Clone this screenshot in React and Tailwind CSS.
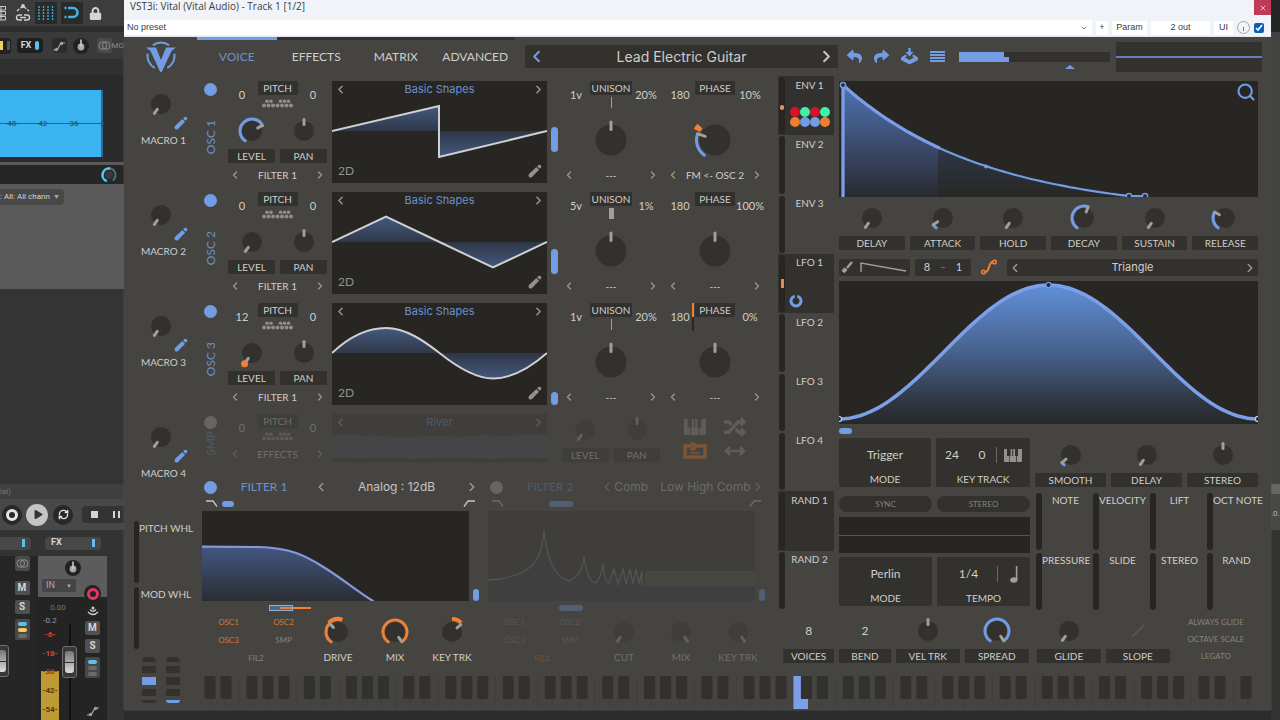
import { useState } from "react";
import clsx from "clsx";
import { ChevronDown, ChevronLeft, ChevronRight, RefreshCw, Search, X } from "lucide-react";
import { FaLock, FaPlay, FaRandom, FaReply, FaShare } from "react-icons/fa";

const BLUE = "#729de5";
const ORANGE = "#f08035";

const MIN = -145;
const MAX = 145;

function polar(r, deg) {
  const a = (deg * Math.PI) / 180;
  return [r * Math.sin(a), -r * Math.cos(a)];
}

function arcPath(r, from, to) {
  const [x1, y1] = polar(r, from);
  const [x2, y2] = polar(r, to);
  return `M${x1} ${y1}A${r} ${r} 0 ${to - from > 180 ? 1 : 0} 1 ${x2} ${y2}`;
}

function Knob({ name, value = MIN, arc, mod, large, dot }) {
  const [angle, setAngle] = useState(value);
  const r = large ? 15.5 : 10;
  const ring = large ? 18.5 : 12;
  const [px, py] = polar(large ? 10.5 : 6.5, angle);
  const [qx, qy] = polar(large ? 18 : 11.5, angle);
  const [dx, dy] = polar(13, MIN);
  const box = large ? "-25 -25 50 50" : "-16 -16 32 32";
  return (
    <span className={clsx("relative block shrink-0", large ? "size-[50px]" : "size-8")}>
      <svg viewBox={box} className="size-full">
        <circle r={r} fill="#32312d" />
        {arc && <path d={arcPath(ring, MIN, angle)} fill="none" stroke={arc} strokeWidth="3" strokeLinecap="round" />}
        <path d={`M${px} ${py}L${qx} ${qy}`} stroke="#a09f9c" strokeWidth="3" strokeLinecap="round" />
        {mod && (
          <path d={arcPath(ring + (large ? 2 : 1), mod[0], mod[1])} fill="none" stroke={ORANGE} strokeWidth={large ? 7 : 4} />
        )}
        {dot && <circle cx={dx} cy={dy} r="3.5" fill={ORANGE} />}
      </svg>
      <input
        type="range"
        min={MIN}
        max={MAX}
        value={angle}
        aria-label={name}
        onChange={(e) => setAngle(Number(e.target.value))}
        className="absolute inset-0 size-full cursor-pointer opacity-0"
      />
    </span>
  );
}

function Tag({ children, className }) {
  return (
    <span
      className={clsx(
        "flex h-[14px] items-center justify-center rounded-[1px] bg-[#32312d] text-[10px] leading-none text-[#cfcecb]",
        className
      )}
    >
      {children}
    </span>
  );
}

function KnobCell({ label, className, ...knob }) {
  return (
    <div className={clsx("flex flex-col items-center gap-[2px]", className)}>
      <Knob name={label} {...knob} />
      <Tag className="w-full">{label}</Tag>
    </div>
  );
}

function Arrow({ dir, size = 12, color = "#9a9996" }) {
  const Icon = dir === "left" ? ChevronLeft : ChevronRight;
  return (
    <button type="button" aria-label={dir === "left" ? "Previous" : "Next"} className="flex shrink-0 items-center justify-center">
      <Icon size={size} color={color} strokeWidth={2.5} />
    </button>
  );
}

function Pencil({ color }) {
  return (
    <svg width="16" height="16" viewBox="0 0 16 16" stroke={color} strokeWidth="4" fill="none">
      <path d="M3.5 12.5L5 11" strokeLinecap="round" />
      <path d="M4 12L10.7 5.3" />
      <path d="M11.6 4.4L12.6 3.4" />
      <circle cx="12.6" cy="3.4" r="1.7" fill={color} stroke="none" />
    </svg>
  );
}

function Picker({ children, className = "mt-1" }) {
  return (
    <div className={clsx("flex h-4 items-center justify-between px-[1px] text-[10px] text-[#cfcecb]", className)}>
      <Arrow dir="left" />
      <span>{children}</span>
      <Arrow dir="right" />
    </div>
  );
}

// the transpose keyboard, two rows of dots under PITCH
function KeyDots() {
  const top = [4.5, 8.5, 18, 22, 26];
  const bottom = [2, 6.5, 11, 15.5, 20, 24.5, 29];
  return (
    <svg width="32" height="9" viewBox="0 0 32 9" fill="#8f8e8b">
      {top.map((x) => (
        <circle key={x} cx={x + 0.5} cy="2.2" r="1.8" />
      ))}
      {bottom.map((x) => (
        <circle key={x} cx={x} cy="6.6" r="2" />
      ))}
    </svg>
  );
}

function PitchRow({ left, right }) {
  return (
    <div className="flex h-7 items-center text-[11px] text-[#cfcecb]">
      <span className="w-7 text-center">{left}</span>
      <div className="flex h-7 flex-1 flex-col items-center gap-1">
        <Tag className="w-10">PITCH</Tag>
        <KeyDots />
      </div>
      <span className="w-7 text-center">{right}</span>
    </div>
  );
}

const waves = {
  saw: "M0 33L107 8V59L215 33",
  triangle: "M0 33L54 7.5L107.5 33L161 58.5L215 33",
  sine: "M0 33C18 16 36 8 54 8C74 8 92 21 107.5 33C125 47 143 58.5 161 58.5C180 58.5 198 48 215 33",
};

function WaveDisplay({ wave }) {
  return (
    <div className="flex min-w-0 flex-1 flex-col bg-[#272622]">
      <div className="flex h-[17px] items-center justify-between px-[2px] font-['Inter',sans-serif] text-[11px] text-[#6c8fd0]">
        <Arrow dir="left" size={13} />
        <span>Basic Shapes</span>
        <Arrow dir="right" size={13} />
      </div>
      <svg viewBox="0 0 215 65" preserveAspectRatio="none" className="h-[65px] w-full">
        <defs>
          <linearGradient id={wave} x1="0" y1="8" x2="0" y2="59" gradientUnits="userSpaceOnUse">
            <stop offset="0" stopColor="#44597f" />
            <stop offset="0.5" stopColor="#2f3746" />
            <stop offset="1" stopColor="#44597f" />
          </linearGradient>
        </defs>
        <path d={waves[wave]} fill={`url(#${wave})`} stroke="#d0d0d4" strokeWidth="2" vectorEffect="non-scaling-stroke" />
      </svg>
      <div className="flex h-4 items-center justify-between pr-1 pl-[6px] text-[#92918e]">
        <span className="text-xs">2D</span>
        <button type="button" aria-label="Edit wavetable">
          <Pencil color="#92918e" />
        </button>
      </div>
    </div>
  );
}

const oscs = [
  {
    name: "OSC 1", wave: "saw", pitch: "0", fine: "0", level: { value: 62, arc: BLUE }, slider: "mt-[46px] h-[25px]",
    voices: "1v", detune: "20%", phase: "180", random: "10%", warp: "FM <- OSC 2", warpKnob: { value: -70, arc: BLUE, mod: [-62, -47] },
  },
  {
    name: "OSC 2", wave: "triangle", pitch: "0", fine: "0", level: {}, slider: "mt-[57px] h-[25px]",
    voices: "5v", detune: "1%", phase: "180", random: "100%", warp: "---", warpKnob: { value: 0 }, wide: true,
  },
  {
    name: "OSC 3", wave: "sine", pitch: "12", fine: "0", level: { dot: true }, slider: "mt-[89px] h-[13px]",
    voices: "1v", detune: "20%", phase: "180", random: "0%", warp: "---", warpKnob: { value: 0 }, phaseMod: true,
  },
];

function Osc({ osc }) {
  return (
    <div className="flex h-[102px]">
      <div className="flex w-[31px] flex-col items-start pt-[2px] pl-[7px]">
        <button type="button" aria-label={osc.name} className="size-[13px] rounded-full bg-[#729de5]" />
        <span className="mt-6 rotate-180 text-xs leading-[13px] text-[#6c8fd0] [writing-mode:vertical-rl]">{osc.name}</span>
      </div>
      <div className="w-[99px]">
        <PitchRow left={osc.pitch} right={osc.fine} />
        <div className="mt-[6px] flex gap-[5px]">
          <KnobCell label="LEVEL" className="flex-1" {...osc.level} />
          <KnobCell label="PAN" className="flex-1" value={0} />
        </div>
        <Picker>FILTER 1</Picker>
      </div>
      <div className="ml-[5px] flex min-w-0 flex-1">
        <WaveDisplay wave={osc.wave} />
      </div>
      <div className="w-[15px] pl-1">
        <div className={clsx("w-[7px] rounded-full bg-[#729de5]", osc.slider)} />
      </div>
      <div className="w-[98px]">
        <div className="flex h-7 items-center text-[11px] text-[#cfcecb]">
          <span className="w-7 text-center">{osc.voices}</span>
          <div className="flex h-7 flex-1 flex-col items-center gap-[2px]">
            <Tag className="w-[42px]">UNISON</Tag>
            <span className={clsx("h-[11px] bg-[#a09f9c]", osc.wide ? "w-[5px]" : "w-px")} />
          </div>
          <span className="w-7 text-center">{osc.detune}</span>
        </div>
        <div className="mt-[6px] flex justify-center">
          <Knob name="Distortion" large value={0} />
        </div>
        <Picker className="mt-[2px]">---</Picker>
      </div>
      <div className="mr-[14px] ml-[6px] w-[98px]">
        <div className="flex h-7 items-center text-[11px] text-[#cfcecb]">
          <span className="w-7 text-center">{osc.phase}</span>
          <div className="relative h-7 flex-1">
            {osc.phaseMod && (
              <span className="absolute -left-[2px] h-7 w-[2px] border-t-[14px] border-[#f08035] bg-[#272622]" />
            )}
            <Tag className="mx-[1px]">PHASE</Tag>
          </div>
          <span className="flex w-7 justify-center">{osc.random}</span>
        </div>
        <div className="mt-[6px] flex justify-center">
          <Knob name="Warp" large {...osc.warpKnob} />
        </div>
        <Picker className="mt-[2px]">{osc.warp}</Picker>
      </div>
    </div>
  );
}

function PianoIcon({ w = 18, h = 13, color = "#92918e" }) {
  return (
    <svg width={w} height={h} viewBox="0 0 18 13" fill={color}>
      <path d="M0 0H3V7H5V13H1Q0 13 0 12ZM5.6 13V7H6.6V0H8.2V7H9.2V0H11V7H12V13ZM12.8 13V7H14V0H18V12Q18 13 17 13Z" />
    </svg>
  );
}

function Sampler() {
  return (
    <div className="flex h-12 opacity-30">
      <div className="flex w-[31px] flex-col items-start pt-[2px] pl-[7px]">
        <button type="button" aria-label="SMP" className="size-[13px] rounded-full bg-[#b4b3b8]" />
        <span className="mt-[2px] rotate-180 text-xs leading-[13px] text-[#6c8fd0] [writing-mode:vertical-rl]">SMP</span>
      </div>
      <div className="w-[99px]">
        <PitchRow left="0" right="0" />
        <Picker>EFFECTS</Picker>
      </div>
      <div className="ml-[5px] min-w-0 flex-1 bg-[#32312d]">
        <div className="flex h-[17px] items-center justify-between px-[2px] font-['Inter',sans-serif] text-[11px] text-[#6c8fd0]">
          <Arrow dir="left" size={13} />
          <span>River</span>
          <Arrow dir="right" size={13} />
        </div>
        <svg viewBox="0 0 215 31" preserveAspectRatio="none" className="h-[31px] w-full">
          <path d="M0 5L16 3L30 5L42 4L60 6L110 5L128 6L150 4L172 5L190 4L215 3V28L190 27L160 28L120 27L80 28L42 26L30 28L0 27Z" fill="#3f4956" />
        </svg>
      </div>
      <div className="ml-[15px] flex w-[98px] gap-[5px]">
        <KnobCell label="LEVEL" className="flex-1" />
        <KnobCell label="PAN" className="flex-1" value={0} />
      </div>
      <div className="mr-[14px] ml-[6px] grid w-[98px] grid-cols-2 place-items-center px-[9px] text-[#9a9996]">
        <PianoIcon w={24} h={16} color="#9a9996" />
        <FaRandom size={22} />
        <svg width="26" height="18" viewBox="0 0 26 18" fill="none" stroke="#ff7a1a" strokeWidth="3.5">
          <path d="M10 4H3V15H23V4H16M9 1L15 4L9 8" />
          <path d="M8 11H18" strokeWidth="1.5" />
        </svg>
        <svg width="24" height="12" viewBox="0 0 24 12" fill="none" stroke="currentColor" strokeWidth="2.5">
          <path d="M3 6H21M7 2L3 6L7 10M17 2L21 6L17 10" />
        </svg>
      </div>
    </div>
  );
}

function Rolloff({ flip }) {
  return (
    <svg width="12" height="7" viewBox="0 0 12 7" fill="none" stroke="#c6c5c2" strokeWidth="1.3" className={clsx(flip && "-scale-x-100")}>
      <path d="M0 1H7L11 6.5" />
    </svg>
  );
}

function LowPass() {
  return (
    <svg viewBox="0 0 267 90" preserveAspectRatio="none" className="h-[90px] w-full bg-[#272622]">
      <defs>
        <linearGradient id="lowpass" x1="0" y1="36" x2="0" y2="90" gradientUnits="userSpaceOnUse">
          <stop offset="0" stopColor="#425681" />
          <stop offset="1" stopColor="#2a2e33" />
        </linearGradient>
      </defs>
      <path
        d="M-3 35.5L56 36C88 36.5 104 45 121 55.7C138 66 155 80 171 90V95H-3Z"
        fill="url(#lowpass)"
        stroke="#8a97dc"
        strokeWidth="2.2"
        vectorEffect="non-scaling-stroke"
      />
    </svg>
  );
}

function CombShape() {
  return (
    <svg viewBox="0 0 267 90" preserveAspectRatio="none" className="h-[90px] w-full bg-[#32312d]">
      <path d="M0 69Q24 68 38 59Q54 50 56 19Q60 64 81 70Q93 66 96 46Q100 72 108 72Q113 66 115 53Q117 72 121 72L126 58L129 74L133 58L137 74L141 58L145 74L148 58L151 74H267V90H0Z" fill="#35353d" />
      <path d="M157 60H267V75H157Z" fill="#4e5149" />
      <path
        d="M0 69Q24 68 38 59Q54 50 56 19Q60 64 81 70Q93 66 96 46Q100 72 108 72Q113 66 115 53Q117 72 121 72L126 58L130 73L135 58L138 73L142 58L145 73L148 58L151 73L154 60V75"
        fill="none"
        stroke="#74776f"
        strokeWidth="1.4"
      />
    </svg>
  );
}

function Filter({ second }) {
  const on = "text-[#d9742f]";
  const off = "text-[#84837f]";
  return (
    <section className={clsx("flex min-w-0 flex-1 flex-col", second && "opacity-30")}>
      <div className="flex h-5 items-center pl-[7px]">
        <button type="button" aria-label="Filter power" className={clsx("size-[13px] rounded-full", second ? "bg-[#b4b3b8]" : "bg-[#729de5]")} />
        <h2 className="w-[94px] text-center text-xs text-[#6c8fd0]">{second ? "FILTER 2" : "FILTER 1"}</h2>
        <div className="flex flex-1 items-center justify-between pr-1 pl-[3px] font-['Inter',sans-serif] text-xs text-[#c6c5c2]">
          <Arrow dir="left" size={14} />
          {second ? (
            <span className="flex gap-3 whitespace-nowrap">
              <span>Comb</span>
              <span>Low High Comb</span>
            </span>
          ) : (
            <span>Analog : 12dB</span>
          )}
          <Arrow dir="right" size={14} />
        </div>
      </div>
      <div className="flex h-[13px] items-center pr-2 pl-[9px]">
        <Rolloff />
        <div className="flex-1">
          <div className={clsx("h-[6px] rounded-full bg-[#729de5]", second ? "ml-[45px] w-6" : "ml-1 w-3")} />
        </div>
        <Rolloff flip />
      </div>
      <div className="mt-[1px] flex items-end pl-[5px]">
        <div className="min-w-0 flex-1">{second ? <CombShape /> : <LowPass />}</div>
        <div className="ml-1 mr-1 h-3 w-[6px] rounded-full bg-[#729de5]" />
      </div>
      <div className="mt-1 flex h-[6px] items-center pl-[72px]">
        {second ? (
          <div className="ml-1 h-[6px] w-6 rounded-sm bg-[#729de5]" />
        ) : (
          <>
            <div className="flex h-[6px] w-6 items-center justify-end border border-[#8db0d8] bg-[#49698d]">
              <div className="h-[2px] w-3 bg-[#f08035]" />
            </div>
            <div className="h-[2px] w-[18px] bg-[#f08035]" />
          </>
        )}
      </div>
      <div className="flex">
        <div className="grid w-[114px] grid-cols-2 gap-y-[5px] pt-[5px] pl-1 text-center text-[8px] leading-3">
          <button type="button" className={second ? off : on}>OSC1</button>
          <button type="button" className={second ? off : on}>OSC2</button>
          <button type="button" className={second ? off : on}>OSC3</button>
          <button type="button" className={off}>SMP</button>
          <button type="button" className={clsx("col-span-2", second ? on : off)}>{second ? "FIL1" : "FIL2"}</button>
        </div>
        <div className="flex flex-1 justify-between pr-1 text-[10px] text-[#cfcecb]">
          {(second
            ? [["CUT", {}], ["MIX", { value: MAX }], ["KEY TRK", { value: MAX }]]
            : [
                ["DRIVE", { value: -45, arc: ORANGE, mod: [-45, 20] }],
                ["MIX", { value: MAX, arc: ORANGE }],
                ["KEY TRK", { value: 50, mod: [0, 45] }],
              ]
          ).map(([label, knob]) => (
            <div key={label} className="flex w-[54px] flex-col items-center gap-[2px] pt-[5px]">
              <Knob name={label} {...knob} />
              <span className="h-[14px] leading-[14px] whitespace-nowrap">{label}</span>
            </div>
          ))}
        </div>
      </div>
    </section>
  );
}

const envDots = ["#d3142c", "#3ff0ab", "#d3142c", "#3ff0ab", "#ee7f31", "#729de5", "#729de5", "#ee7f31"];

function ModTabs() {
  const tabs = ["ENV 1", "ENV 2", "ENV 3", "LFO 1", "LFO 2", "LFO 3", "LFO 4", "RAND 1", "RAND 2"];
  const active = ["ENV 1", "LFO 1", "RAND 1"];
  return (
    <nav className="flex w-14 shrink-0 flex-col">
      {tabs.map((tab) => (
        <div key={tab} className={clsx("flex flex-1 pl-[1px]", active.includes(tab) && "bg-[#32312d]")}>
          <div className="my-[1px] flex w-[6px] flex-col items-center justify-center rounded-full bg-[#272622]">
            {tab === "ENV 1" && <span className="mt-1 h-[5px] w-1 rounded-full bg-[#e79260]" />}
            {tab === "LFO 1" && <span className="h-[9px] w-[3px] bg-[#e8884e]" />}
          </div>
          <div className="flex flex-1 flex-col">
            <button type="button" className="h-[18px] text-center text-[10px] text-[#cfcecb]">{tab}</button>
            {tab === "ENV 1" && (
              <div className="mt-[13px] ml-[5px] grid w-10 grid-cols-4">
                {envDots.map((color, i) => (
                  <span key={i} className="size-[10px] rounded-full" style={{ background: color }} />
                ))}
              </div>
            )}
            {tab === "LFO 1" && (
              <svg width="14" height="14" viewBox="-7 -7 14 14" className="mt-[22px] ml-1">
                <path d={arcPath(5, 15, 345)} fill="none" stroke={BLUE} strokeWidth="3" />
              </svg>
            )}
          </div>
        </div>
      ))}
    </nav>
  );
}

const envCurve = Array.from({ length: 60 }, (_, i) => {
  const t = i / 59;
  return `${(4 + 286 * t).toFixed(1)} ${(4 + (111 * (1 - Math.exp(-2 * t))) / (1 - Math.exp(-2))).toFixed(1)}`;
});

function Envelope() {
  return (
    <div className="relative bg-[#272622]">
      <svg viewBox="0 0 419 116" preserveAspectRatio="none" className="h-[116px] w-full">
        <defs>
          <linearGradient id="env" x1="0" y1="0" x2="0" y2="116" gradientUnits="userSpaceOnUse">
            <stop offset="0" stopColor="#4f76b5" />
            <stop offset="0.6" stopColor="#3a4767" />
            <stop offset="1" stopColor="#292a2e" />
          </linearGradient>
          <linearGradient id="envTail" x1="0" y1="60" x2="0" y2="116" gradientUnits="userSpaceOnUse">
            <stop offset="0" stopColor="#303a4d" />
            <stop offset="1" stopColor="#272724" />
          </linearGradient>
        </defs>
        <path d={`M4 116L${envCurve.join("L")}V116Z`} fill="url(#envTail)" />
        <path d={`M4 116L${envCurve.slice(0, 20).join("L")}L99 66V116Z`} fill="url(#env)" />
        <path d={`M4 116L${envCurve.join("L")}H307`} fill="none" stroke={BLUE} strokeWidth="2.2" />
        <path d={`M4 116V4L${envCurve.slice(0, 21).join("L")}`} fill="none" stroke="#7c9de8" strokeWidth="3.2" />
        <circle cx="4" cy="4" r="2.6" fill="#272622" stroke={BLUE} strokeWidth="1.5" />
        <circle cx="147" cy="85.5" r="2" fill={BLUE} />
        <circle cx="290" cy="115" r="2.6" fill="#272622" stroke={BLUE} strokeWidth="1.5" />
        <circle cx="306" cy="115" r="2.6" fill="#272622" stroke={BLUE} strokeWidth="1.5" />
      </svg>
      <button type="button" aria-label="Zoom" className="absolute top-[1px] right-[2px]">
        <Search size={20} color={BLUE} strokeWidth={2.5} />
      </button>
    </div>
  );
}

const lfoCurve = Array.from({ length: 81 }, (_, i) => {
  const t = i / 80;
  return `${(419 * t).toFixed(1)} ${(138 - 67 * (1 - Math.cos(2 * Math.PI * t))).toFixed(1)}`;
}).join("L");

function Lfo() {
  return (
    <svg viewBox="0 0 419 143" preserveAspectRatio="none" className="h-[143px] w-full bg-[#272622]">
      <defs>
        <linearGradient id="lfo" x1="0" y1="0" x2="0" y2="143" gradientUnits="userSpaceOnUse">
          <stop offset="0" stopColor="#6192dc" />
          <stop offset="0.5" stopColor="#47618c" />
          <stop offset="0.85" stopColor="#2f3642" />
          <stop offset="1" stopColor="#272726" />
        </linearGradient>
      </defs>
      <path d={`M0 143L${lfoCurve}V143Z`} fill="url(#lfo)" />
      <path d={`M${lfoCurve}`} fill="none" stroke="#7d9fe8" strokeWidth="3.6" />
      <circle cx="209.5" cy="4" r="2.6" fill="#1d2736" stroke={BLUE} strokeWidth="1.3" />
      <circle cx="0" cy="138" r="2.6" fill="#272622" stroke="#b4cbf4" strokeWidth="1.3" />
      <circle cx="419" cy="138" r="2.6" fill="#272622" stroke="#b4cbf4" strokeWidth="1.3" />
    </svg>
  );
}

function ValueBox({ label, icon, children }) {
  return (
    <div className="flex h-[49px] flex-1 flex-col rounded-[2px] bg-[#32312d] text-center text-[#cfcecb]">
      <div className={clsx("flex h-[34px] items-center justify-center text-xs", icon && "pr-2")}>
        {children}
        {icon}
      </div>
      <span className="text-[10px] leading-[14px]">{label}</span>
    </div>
  );
}

function NoteIcon() {
  return (
    <svg width="9" height="17" viewBox="0 0 9 17" fill="#a09f9c">
      <ellipse cx="3.8" cy="14" rx="3.6" ry="2.8" />
      <path d="M5.8 0H7.4V14H5.8Z" />
    </svg>
  );
}

function NoteSources() {
  const cells = ["NOTE", "VELOCITY", "LIFT", "OCT NOTE", "PRESSURE", "SLIDE", "STEREO", "RAND"];
  return (
    <div className="-mr-[6px] grid flex-[228] grid-cols-4 gap-y-[3px] pt-[1px]">
      {cells.map((cell) => (
        <div key={cell} className="flex h-[57px] min-w-0">
          <div className="w-[6px] shrink-0 rounded-full bg-[#272622]" />
          <span className="flex-1 pr-1 text-center text-[10px] leading-[15px] whitespace-nowrap text-[#cfcecb]">{cell}</span>
        </div>
      ))}
    </div>
  );
}

function Modulators() {
  return (
    <div className="ml-[5px] flex min-w-0 flex-1 flex-col pt-[5px]">
      <Envelope />
      <div className="mt-[5px] flex gap-[5px]">
        <KnobCell label="DELAY" className="flex-1" />
        <KnobCell label="ATTACK" className="flex-1" value={-125} arc={BLUE} />
        <KnobCell label="HOLD" className="flex-1" />
        <KnobCell label="DECAY" className="flex-1" value={20} arc={BLUE} />
        <KnobCell label="SUSTAIN" className="flex-1" />
        <KnobCell label="RELEASE" className="flex-1" value={-60} arc={BLUE} />
      </div>
      <div className="mt-[9px] flex h-[17px] text-[#cfcecb]">
        <div className="flex w-[71px] items-center rounded-[2px] bg-[#32312d]">
          <svg width="70" height="17" viewBox="0 0 70 17" fill="none" stroke="#a09f9c" strokeWidth="1.4">
            <path d="M13 3L8 9" strokeWidth="2.4" />
            <path d="M7 9.5L4 13" strokeWidth="4" />
            <path d="M22 13V4L67 12" />
          </svg>
        </div>
        <div className="ml-[5px] flex w-14 items-center justify-around rounded-[2px] bg-[#32312d] px-1 text-[11px]">
          <span>8</span>
          <span className="text-[#7a7976]">–</span>
          <span>1</span>
        </div>
        <svg width="16" height="16" viewBox="0 0 16 16" fill="none" stroke={ORANGE} strokeWidth="1.6" className="mx-[10px]">
          <circle cx="2.5" cy="13" r="1.8" />
          <circle cx="13.5" cy="3" r="1.8" />
          <path d="M4.3 13C9 13 7 3 11.7 3" strokeWidth="2" />
        </svg>
        <div className="flex flex-1 items-center justify-between rounded-[2px] bg-[#32312d] px-[1px] font-['Inter',sans-serif] text-[11px]">
          <Arrow dir="left" size={14} />
          <span>Triangle</span>
          <Arrow dir="right" size={14} />
        </div>
      </div>
      <div className="mt-[5px]">
        <Lfo />
      </div>
      <div className="mt-1 h-[6px] w-[13px] rounded-full bg-[#729de5]" />
      <div className="mt-1 flex gap-[5px]">
        <div className="flex flex-[191] gap-[5px]">
          <ValueBox label="MODE">Trigger</ValueBox>
          <ValueBox label="KEY TRACK" icon={<PianoIcon />}>
            <span className="w-8">24</span>
            <span className="w-7">0</span>
            <span className="mr-[7px] h-4 w-px bg-[#6a6966]" />
          </ValueBox>
        </div>
        <div className="flex flex-[223] gap-[5px] pt-[1px]">
          <KnobCell label="SMOOTH" className="flex-1" value={-130} arc={BLUE} />
          <KnobCell label="DELAY" className="flex-1" />
          <KnobCell label="STEREO" className="flex-1" value={0} />
        </div>
      </div>
      <div className="mt-[5px] flex gap-[6px]">
        <div className="flex flex-[191] flex-col pt-1">
          <div className="flex gap-[5px]">
            <button type="button" className="h-4 flex-1 rounded-full bg-[#32312d] text-[8px] text-[#84837f]">SYNC</button>
            <button type="button" className="h-4 flex-1 rounded-full bg-[#32312d] text-[8px] text-[#84837f]">STEREO</button>
          </div>
          <div className="mt-[5px] flex h-9 items-center bg-[#272622]">
            <div className="h-px w-full bg-[#56554f]" />
          </div>
          <div className="mt-1 flex gap-[5px]">
            <ValueBox label="MODE">Perlin</ValueBox>
            <ValueBox label="TEMPO" icon={<NoteIcon />}>
              <span className="w-12 pl-2">1/4</span>
              <span className="mr-3 ml-2 h-4 w-px bg-[#6a6966]" />
            </ValueBox>
          </div>
        </div>
        <NoteSources />
      </div>
    </div>
  );
}

function Amount({ label, children }) {
  return (
    <div className="flex flex-[52] flex-col gap-[2px] text-center text-xs text-[#cfcecb]">
      <span className="h-8 leading-8">{children}</span>
      <Tag>{label}</Tag>
    </div>
  );
}

function VoiceControls() {
  return (
    <div className="flex pt-[5px] pl-[5px]">
      <div className="flex flex-[248] gap-[5px]">
        <Amount label="VOICES">8</Amount>
        <Amount label="BEND">2</Amount>
        <KnobCell label="VEL TRK" className="flex-[65]" value={0} />
        <KnobCell label="SPREAD" className="flex-[65]" value={MAX} arc={BLUE} />
      </div>
      <div className="ml-2 flex flex-[134] gap-[5px]">
        <KnobCell label="GLIDE" className="flex-1" />
        <div className="flex flex-1 flex-col items-center gap-[2px]">
          <svg width="32" height="32" viewBox="0 0 32 32" stroke="#5c5b57" strokeWidth="1.5">
            <path d="M10 22L22 10" />
          </svg>
          <Tag className="w-full">SLOPE</Tag>
        </div>
      </div>
      <div className="flex flex-[85] flex-col items-center gap-[5px] pt-[1px] pl-1 text-[8px] leading-3 text-[#84837f]">
        <button type="button">ALWAYS GLIDE</button>
        <button type="button">OCTAVE SCALE</button>
        <button type="button">LEGATO</button>
      </div>
    </div>
  );
}

function Keyboard() {
  const black = [];
  for (let o = 0; o < 11; o++) {
    [13, 29, 55, 71, 87].forEach((x) => {
      if (o * 99.4 + x < 1055) black.push(o * 99.4 + x);
    });
  }
  return (
    <svg viewBox="0 0 1065 34" preserveAspectRatio="none" className="mt-[11px] mr-[9px] h-[34px] w-auto">
      {Array.from({ length: 74 }, (_, i) => (
        <path key={i} d={`M${(i + 1) * 14.2} 2V33`} stroke="#403f3b" strokeWidth="1" />
      ))}
      <path d="M596.4 1H604V24H611V34H596.4Z" fill="#7d9fe8" />
      {black.map((x) => (
        <rect key={x} x={x - 5.5} y="1" width="11" height="23" rx="1.5" fill="#32312d" />
      ))}
    </svg>
  );
}

function Macros() {
  return (
    <aside className="flex w-[73px] shrink-0 flex-col pt-3 text-[10px] text-[#cfcecb]">
      {["MACRO 1", "MACRO 2", "MACRO 3", "MACRO 4"].map((macro) => (
        <div key={macro} className="flex h-[111px] flex-col items-center">
          <Knob name={macro} />
          <button type="button" aria-label="Edit macro" className="-mt-[5px] ml-10">
            <Pencil color={BLUE} />
          </button>
          <span className="mt-[2px] pl-[6px] leading-[14px]">{macro}</span>
        </div>
      ))}
      <div className="-mt-[11px] flex flex-col gap-1 pl-[10px]">
        {["PITCH WHL", "MOD WHL"].map((wheel) => (
          <div key={wheel} className="flex h-[62px]">
            <div className="w-[5px] shrink-0 rounded-full bg-[#272622]" />
            <span className="flex-1 pr-1 text-center leading-[14px] whitespace-nowrap">{wheel}</span>
          </div>
        ))}
      </div>
      <div className="mt-[8px] flex justify-center gap-[10px]">
        {[2, 4].map((lit) => (
          <div key={lit} className="flex w-[14px] flex-col gap-1">
            {[5, 7, 8, 7, 3].map((h, i) => (
              <span
                key={i}
                className={clsx(
                  i === 0 && "rounded-t-lg",
                  i === 4 && "rounded-b-lg",
                  i === lit ? "bg-[#729de5]" : "bg-[#32312d]"
                )}
                style={{ height: h }}
              />
            ))}
          </div>
        ))}
      </div>
    </aside>
  );
}

function Logo() {
  return (
    <svg width="30" height="32" viewBox="-15 -15 30 32" fill="none" stroke={BLUE} strokeWidth="2">
      <path d={arcPath(13.5, -37, 37)} />
      <path d={arcPath(13.5, 80, 152)} />
      <path d={arcPath(13.5, 208, 280)} />
      <path d="M-15 -8.5H-5L0 4L5 -8.5H15L10.500 -5L1 15.500Q0 17 -1 15.500L-10.500 -5Z" fill={BLUE} stroke="none" />
    </svg>
  );
}

function Header() {
  const tabs = ["VOICE", "EFFECTS", "MATRIX", "ADVANCED"];
  return (
    <header className="flex h-[39px]">
      <div className="flex w-[73px] shrink-0 items-center justify-center">
        <Logo />
      </div>
      <div className="flex flex-[641] items-start">
        <nav className="flex w-[318px] shrink-0">
          {tabs.map((tab, i) => (
            <button
              key={tab}
              type="button"
              className={clsx(
                "h-9 w-20 border-t-[3px] text-[12px]",
                i === 0 ? "border-[#729de5] text-[#6c8fd0]" : "border-[#32312d] text-[#cfcecb]"
              )}
            >
              {tab}
            </button>
          ))}
        </nav>
        <div className="mt-2 ml-[10px] flex h-[23px] flex-1 items-center justify-between bg-[#32312d] px-[2px] font-['Inter',sans-serif] text-sm text-[#cfcecb]">
          <Arrow dir="left" size={19} color={BLUE} />
          <span>Lead Electric Guitar</span>
          <Arrow dir="right" size={19} color="#c6c5c2" />
        </div>
      </div>
      <div className="flex flex-[433] items-center">
        <div className="ml-[9px] flex w-[98px] items-center justify-between text-[#729de5]">
          <button type="button" aria-label="Undo"><FaReply size={15} /></button>
          <button type="button" aria-label="Redo"><FaShare size={15} /></button>
          <button type="button" aria-label="Save">
            <svg width="17" height="17" viewBox="0 0 17 17" fill="currentColor">
              <path d="M7.3 0H9.7V4H12.5L8.5 8.5L4.5 4H7.3Z" />
              <path d="M0 9.5L4.5 6.5L6 8L4 9.5L8.5 12L13 9.5L11 8L12.5 6.5L17 9.5V12L8.5 16.5L0 12Z" />
            </svg>
          </button>
          <button type="button" aria-label="Menu" className="flex w-[15px] flex-col gap-[1px]">
            {[0, 1, 2, 3].map((i) => (
              <span key={i} className="h-[2px] w-full bg-current" />
            ))}
          </button>
        </div>
        <div className="ml-[14px] flex flex-1 flex-col pt-2">
          <div className="h-[5px] bg-[#32312d]">
            <div className="h-full w-[30%] bg-[#729de5]" />
          </div>
          <div className="h-[5px] bg-[#32312d]">
            <div className="h-full w-[33%] bg-[#729de5]" />
          </div>
          <svg width="10" height="7" viewBox="0 0 10 7" fill={BLUE} className="ml-[106px]">
            <path d="M0 7L5 3L10 7Z" />
          </svg>
        </div>
        <div className="mr-[9px] ml-[6px] flex h-[30px] w-[146px] items-center bg-[#32312d]">
          <div className="h-[2px] w-full bg-[#5f80bd]" />
        </div>
      </div>
    </header>
  );
}

function TitleBar() {
  return (
    <div className="bg-[#f0f3f8] text-[#3c3c3c]">
      <div className="flex h-[18px] items-start justify-between pl-[6px]">
        <span className="font-['Open_Sans','Roboto',sans-serif] text-[10px] leading-[13px]">VST3i: Vital (Vital Audio) - Track 1 [1/2]</span>
        <button type="button" aria-label="Close" className="flex h-[15px] w-[17px] items-center justify-center bg-[#c03a55]">
          <X size={8} color="#fff" />
        </button>
      </div>
      <div className="flex h-[19px] items-center gap-1 pr-[7px] font-['Liberation_Sans',sans-serif] text-[9px]">
        <div className="flex h-[15px] flex-1 items-center bg-white pr-1">
          <select aria-label="Preset" className="flex-1 appearance-none bg-transparent pl-[3px]">
            <option>No preset</option>
          </select>
          <ChevronDown size={8} />
        </div>
        <button type="button" className="h-[14px] w-3 bg-white">+</button>
        <button type="button" className="h-[14px] w-[35px] bg-white">Param</button>
        <button type="button" className="h-[14px] w-[59px] bg-white">2 out</button>
        <button type="button" className="h-[14px] w-[19px] bg-white">UI</button>
        <span className="flex size-[13px] items-end justify-center rounded-full border border-[#a5a5a5] bg-[#f4f4f4] pb-[2px]">
          <span className="h-1 w-px bg-[#777]" />
        </span>
        <input type="checkbox" defaultChecked aria-label="Enable" className="size-[10px] accent-[#0a5fb4]" />
      </div>
    </div>
  );
}

function Plugin() {
  return (
    <main className="z-10 flex min-w-0 flex-1 flex-col">
      <TitleBar />
      <div className="bg-[#454440] font-['Lato',sans-serif] shadow-[0_1px_2px_#555]">
        <Header />
        <div className="flex">
          <Macros />
          <div className="flex min-w-0 flex-1 flex-col">
            <div className="flex">
              <div className="min-w-0 flex-[581]">
                <div className="flex flex-col gap-[9px] pt-[5px]">
                  {oscs.map((osc) => (
                    <Osc key={osc.name} osc={osc} />
                  ))}
                  <Sampler />
                </div>
                <div className="mt-[15px] flex pr-[9px]">
                  <Filter />
                  <Filter second />
                </div>
              </div>
              <div className="mr-[13px] flex min-w-0 flex-[480] flex-col">
                <div className="flex">
                  <ModTabs />
                  <Modulators />
                </div>
                <VoiceControls />
              </div>
            </div>
            <Keyboard />
          </div>
        </div>
      </div>
    </main>
  );
}

function Automation({ size = 14 }) {
  return (
    <svg width={size} height={size} viewBox="0 0 14 14" fill="#a5a5a5" stroke="#a5a5a5">
      <path d="M1 11H4C7 11 7 4 10 4H13" fill="none" strokeWidth="1.2" />
      <circle cx="4.5" cy="10.5" r="1.2" />
      <circle cx="9.5" cy="4.5" r="1.2" />
    </svg>
  );
}

function PanPot({ size = 16 }) {
  return (
    <svg width={size} height={size} viewBox="0 0 16 16" className="shrink-0">
      <circle cx="8" cy="8" r="8" fill="#222" />
      <circle cx="8" cy="9" r="3.4" fill="#aaa" />
      <path d="M8 1.5V9" stroke="#ccc" strokeWidth="1.6" />
    </svg>
  );
}

function Rings() {
  return (
    <svg width="15" height="15" viewBox="0 0 15 15" fill="none" stroke="#8c8c8c" className="shrink-0">
      <rect width="15" height="15" rx="2" fill="#4a4a4a" stroke="none" />
      <circle cx="5.8" cy="7.5" r="3.8" />
      <circle cx="9.2" cy="7.5" r="3.8" />
    </svg>
  );
}

function MixButton({ children }) {
  return (
    <button type="button" className="h-[14px] w-[15px] rounded-[2px] bg-[#505050] text-[10px] leading-none font-bold text-[#d5d5d5]">
      {children}
    </button>
  );
}

function Lamps({ colors }) {
  return (
    <div className="flex h-[21px] w-[15px] flex-col items-center justify-center gap-[2px] rounded-[2px] bg-[#484848]">
      {colors.map((color, i) => (
        <span key={i} className="h-[4px] w-[9px] rounded-full" style={{ background: color }} />
      ))}
    </div>
  );
}

function Fader() {
  return (
    <div className="flex h-8 w-[15px] items-center justify-center rounded-[3px] border border-[#707070] bg-[#383838]">
      <div className="flex h-[22px] w-[9px] items-center rounded-[3px] bg-linear-to-b from-[#777] to-[#ddd]">
        <span className="h-px w-full bg-[#333]" />
      </div>
    </div>
  );
}

function Daw() {
  return (
    <aside className="flex h-screen w-[124px] shrink-0 flex-col overflow-hidden bg-[#333] font-['Roboto',sans-serif] text-[#d5d5d5]">
      <div className="flex h-[26px] items-center bg-[#3d3d3d]">
        <svg width="7" height="16" viewBox="0 0 7 16" fill="none" stroke="#ccc">
          <path d="M-2 1.5H5.5V5H-2M-2 6.5H5.5V10H-2M-2 11.5H5.5V15H-2M1 1V15" />
        </svg>
        <svg width="16" height="18" viewBox="0 0 16 18" fill="none" stroke="#d0d0d0" strokeWidth="1.4" className="mr-1 ml-2">
          <path d="M2 7L8 2L14 7" strokeDasharray="3 1.500" />
          <path d="M7 11H4A2.5 2.5 0 0 0 4 16H7M9 11H12A2.5 2.5 0 0 1 12 16H9M5 13.5H11" />
          <circle cx="8" cy="2" r="1.2" fill="#d0d0d0" />
        </svg>
        <svg width="22" height="22" viewBox="0 0 22 22" stroke="#3cb4d8" strokeWidth="1.3" strokeDasharray="2 1" className="bg-[#2a2a2a]">
          <path d="M4 4V18M8.500 4V18M13 4V18M17.500 4V18" />
        </svg>
        <svg width="22" height="22" viewBox="0 0 22 22" fill="none" stroke="#40b4dc" strokeWidth="2.6" className="ml-1 bg-[#2a2a2a]">
          <path d="M7 6H12A4.500 4.500 0 0 1 12 15H7" />
          <path d="M3.500 6H5.500M3.500 15H5.500" />
        </svg>
        <FaLock size={13} className="ml-[6px]" />
      </div>
      <div className="h-[6px] bg-[#2e2e2e]" />
      <div className="flex h-[27px] items-center gap-[6px] bg-[#3a3a3a] text-[9px] font-bold">
        <div className="flex h-4 w-[11px] items-center gap-1 rounded-r bg-[#222]">
          <span className="h-[9px] w-[3px] bg-[#f0cf5c]" />
          <span className="h-[9px] w-[3px] bg-[#555]" />
        </div>
        <button type="button" className="flex h-[15px] w-[27px] items-center justify-between rounded bg-[#1f1f1f] px-1">
          FX
          <span className="h-[9px] w-1 rounded-sm bg-[#5ac1ee]" />
        </button>
        <button type="button" aria-label="Envelope" className="ml-[3px] flex size-[15px] items-center justify-center rounded bg-[#2b2b2b]">
          <Automation />
        </button>
        <PanPot />
        <div className="ml-[2px] flex items-center text-[8px] font-normal text-[#8c8c8c]">
          <Rings />
          <span>MO</span>
        </div>
      </div>
      <div className="h-[31px] border-b-[15px] border-[#2b2b2b] bg-[#303030]" />
      <div className="h-[72px] bg-[#2b2b2b]">
        <div className="flex h-[67px] w-[103px] items-center border-r-2 border-[#2a6b90] bg-[#3ab3f0]">
          <div className="flex h-px w-full items-center justify-between bg-[#1f6a99] pl-[5px] text-[8px] text-[#1c4560]">
            <span>-48-</span>
            <span>-42-</span>
            <span>-36-</span>
            <span className="-mr-1">-3</span>
          </div>
        </div>
      </div>
      <div className="flex h-[22px] items-center justify-end border-t-[3px] border-[#5a5a5a] bg-[#262626] pr-[6px]">
        <svg width="18" height="18" viewBox="-9 -9 18 18" fill="none">
          <circle r="8.500" fill="#1b2c33" />
          <circle r="4" fill="#3a3a3a" />
          <path d={arcPath(6.500, 0, 145)} stroke="#5a6a70" strokeWidth="2" />
          <path d={arcPath(6.500, -160, 10)} stroke="#5fc6ee" strokeWidth="2.500" />
        </svg>
      </div>
      <div className="h-[105px] bg-[#5a5a5a] pt-[5px]">
        <button type="button" className="flex h-4 w-16 items-center justify-between rounded-r bg-[#484848] pr-1 text-[8px] whitespace-nowrap">
          <span>: All: All chann</span>
          <span className="text-[7px] text-[#aaa]">▼</span>
        </button>
      </div>
      <div className="h-[195px] bg-[#343434]" />
      <div className="h-[15px] bg-[#3f3f3f] text-[8px] leading-[15px] text-[#777]">ial)</div>
      <div className="flex h-[31px] items-center bg-[#484848]">
        <button type="button" aria-label="Record" className="ml-[2px] flex size-5 shrink-0 items-center justify-center rounded-full bg-[#282828]">
          <span className="size-3 rounded-full border-[3px] border-[#e5e5e5]" />
        </button>
        <button type="button" aria-label="Play" className="ml-1 flex size-[22px] shrink-0 items-center justify-center rounded-full bg-[#c4c4c4] pl-[2px]">
          <FaPlay size={9} color="#333" />
        </button>
        <button type="button" aria-label="Repeat" className="ml-[5px] flex size-5 shrink-0 items-center justify-center rounded-full bg-[#282828]">
          <RefreshCw size={11} color="#e5e5e5" strokeWidth={3} />
        </button>
        <div className="ml-[9px] flex h-[17px] flex-1 items-center justify-between rounded-l bg-[#333] pr-1 pl-[9px]">
          <span className="size-[7px] bg-[#d5d5d5]" />
          <span className="h-[7px] w-[7px] border-x-[2px] border-[#d5d5d5]" />
        </div>
      </div>
      <div className="flex h-[26px] items-center bg-[#333] text-[9px] font-bold">
        <span className="flex h-[13px] w-[31px] items-center justify-end rounded-r bg-[#474747] pr-[6px]">
          <span className="h-2 w-[3px] bg-[#5ac1ee]" />
        </span>
        <button type="button" className="ml-[14px] flex h-[13px] w-14 items-center justify-between rounded bg-[#474747] px-[6px]">
          FX
          <span className="h-2 w-[3px] bg-[#5ac1ee]" />
        </button>
      </div>
      <div className="flex flex-1">
        <div className="flex w-[38px] flex-col items-center gap-[5px] bg-[#262626] pl-[6px]">
          <Rings />
          <span className="h-0" />
          <MixButton>M</MixButton>
          <MixButton>S</MixButton>
          <Lamps colors={["#5ac1ee", "#f0cf5c", "#6a6a6a"]} />
          <div className="-ml-[42px]">
            <Fader />
          </div>
        </div>
        <div className="flex w-[69px] flex-col bg-[#242424]">
          <div className="flex h-[41px] flex-col items-center bg-[#5c5c5c] pt-1">
            <PanPot />
            <button type="button" className="mt-[3px] mr-[27px] flex h-[13px] w-[34px] items-center justify-between rounded-[2px] bg-[#444] px-1 text-[9px] text-[#aaa]">
              IN <span className="text-[6px]">▼</span>
            </button>
          </div>
          <div className="flex flex-1">
            <div className="flex w-6 flex-col items-center pt-[6px] text-[8px] leading-[10px] font-bold text-[#e2401f]">
              <span className="pl-4 font-normal text-[#777]">0.00</span>
              <span className="mt-[3px] font-normal text-[#999]">-0.2</span>
              <span className="mt-1">-6-</span>
              <span className="mt-[9px]">-18-</span>
              <div className="mt-3 flex w-[18px] flex-1 flex-col items-center gap-[9px] bg-[#bd9a33] text-[#4d3a10]">
                <span className="-mt-1 text-[#a33318]">-30-</span>
                <span>-42-</span>
                <span>-54-</span>
              </div>
            </div>
            <div className="flex w-[15px] flex-col items-center">
              <span className="mt-[27px] h-[22px] w-[2px] bg-[#111]" />
              <Fader />
              <span className="w-[2px] flex-1 bg-[#111]" />
            </div>
            <div className="flex flex-1 flex-col items-center gap-1 pl-[1px]">
              <button type="button" aria-label="Arm" className="-mt-3 flex size-[17px] items-center justify-center rounded-full bg-[#222]">
                <span className="size-3 rounded-full border-[3px] border-[#e2375f]" />
              </button>
              <svg width="12" height="11" viewBox="0 0 12 11" fill="none" stroke="#ccc" strokeWidth="1.4">
                <path d="M1 6Q6 11 11 6M3 3.500Q6 7 9 3.500" />
                <circle cx="6" cy="2" r="0.800" />
              </svg>
              <MixButton>M</MixButton>
              <MixButton>S</MixButton>
              <Lamps colors={["#5ac1ee", "#6a6a6a", "#6a6a6a"]} />
              <div className="mt-[22px]">
                <Automation />
              </div>
            </div>
          </div>
        </div>
      </div>
    </aside>
  );
}

function App() {
  return (
    <div className="flex h-screen overflow-hidden bg-[#2c2c2c]">
      <Daw />
      <Plugin />
      <div className="flex w-[9px] shrink-0 flex-col bg-[#3d3d3d] font-['Roboto',sans-serif]">
        <div className="h-8 bg-[#262626]" />
        <div className="h-[452px] bg-[#424242]" />
        <div className="h-[10px] bg-[#666]" />
        <div className="h-[36px] bg-[#484848] pt-[14px] text-[8px] leading-3 text-[#b5b5b5]">.0.</div>
        <div className="flex-1 bg-[#333]" />
      </div>
    </div>
  );
}

export default App;
